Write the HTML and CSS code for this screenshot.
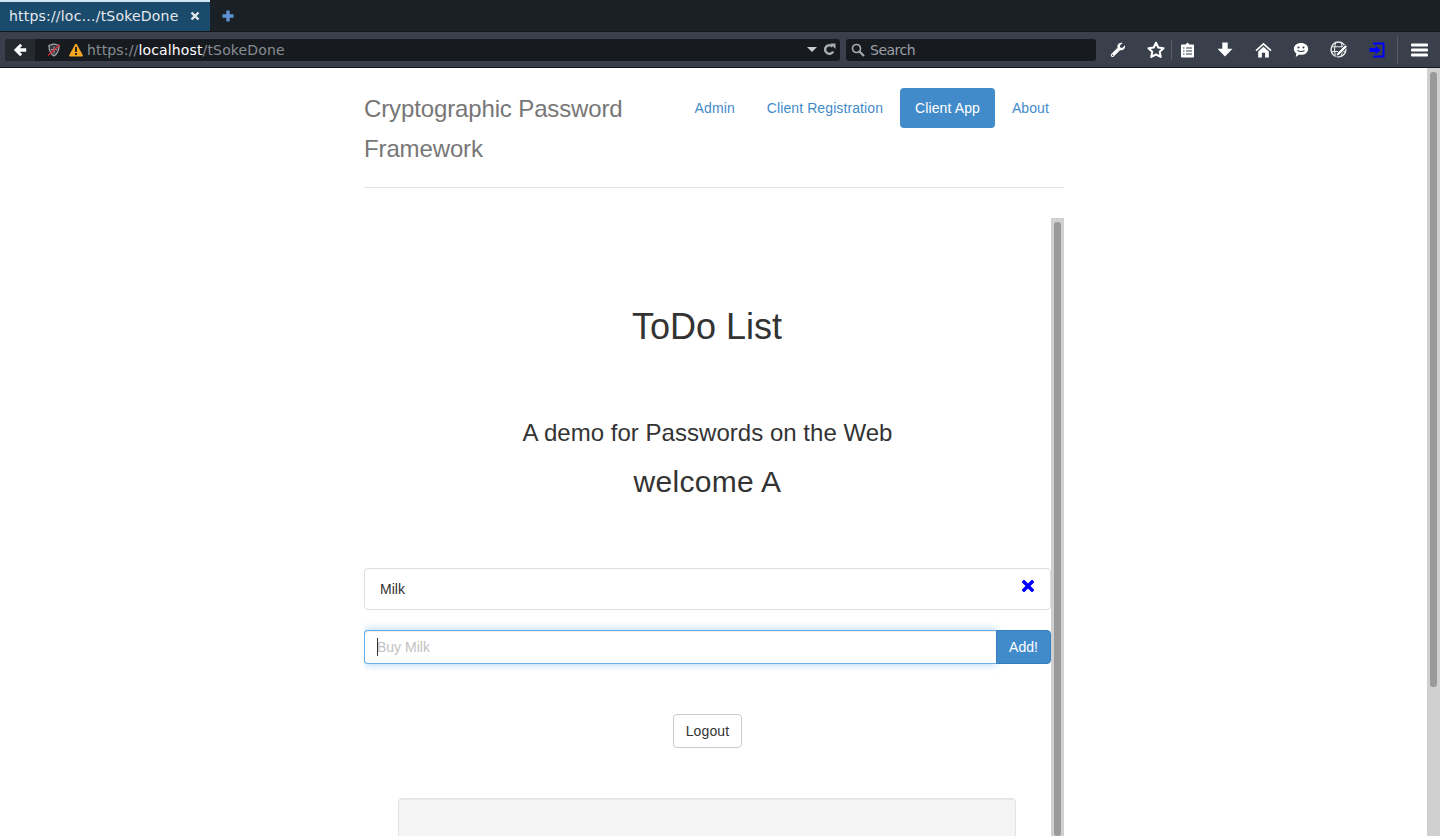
FILE: index.html
```html
<!DOCTYPE html>
<html lang="en">
<head>
  <meta charset="UTF-8" />
  <title>Cryptographic Password Framework</title>
  <link rel="stylesheet" href="styles.css">
</head>
<body>
  <div class="tabbar">
    <div class="tab">
      <span class="tab-title">https://loc…/tSokeDone</span>
      <svg class="tab-close" width="10" height="10" viewBox="0 0 10 10"><path d="M1.5 1.5l7 7M8.5 1.5l-7 7" stroke="#e6e9ec" stroke-width="2.4"/></svg>
    </div>
    <svg class="tab-new" width="12" height="12" viewBox="0 0 12 12"><path d="M6 .5v11M.5 6h11" stroke="#5f93d3" stroke-width="3.4"/></svg>
  </div>

  <div class="toolbar">
    <div class="urlbar">
      <div class="back">
        <svg width="14" height="14" viewBox="0 0 14 14"><path d="M7.200.8L.8 7l6.400 6.200 2-2-2.500-2.400h6.500V5.200H6.700l2.500-2.400z" fill="#fff"/></svg>
      </div>
      <svg class="shield" width="14" height="14" viewBox="0 0 14 14"><path d="M7 1l5 1.500c0 4.600-1 8.200-5 10.300C3 10.700 2 7.100 2 2.500z" fill="#33373d" stroke="#a3a6aa" stroke-width="1.300"/><path d="M7 3.500v7M4.200 6.500h5.600" stroke="#a3a6aa" stroke-width="1"/><path d="M1 12.500L12.500 1.800" stroke="#e0222e" stroke-width="1.300"/></svg>
      <svg class="warn" width="14" height="14" viewBox="0 0 14 14"><path d="M7 .8c.5 0 .8.3 1 .7l5.700 10.600c.4.700 0 1.400-.8 1.400H1.100c-.8 0-1.200-.7-.8-1.400L6 1.500c.2-.4.5-.7 1-.7z" fill="#f5a623"/><path d="M6 4h2v5H6zM6 10h2v2H6z" fill="#2b2415"/></svg>
      <span class="url"><span class="url-dim">https://</span>localhost<span class="url-dim">/tSokeDone</span></span>
      <svg class="url-drop" width="10" height="5" viewBox="0 0 10 5"><path d="M0 0h10L5 5z" fill="#c9ccd0"/></svg>
      <svg class="url-reload" width="13" height="13" viewBox="0 0 13 13"><path d="M10.200 8.500A4.300 4.300 0 1 1 9.500 3.500" fill="none" stroke="#a5abb2" stroke-width="2.600"/><path d="M7 .5h5.500V6z" fill="#a5abb2"/></svg>
    </div>
    <div class="searchbar">
      <svg width="14" height="14" viewBox="0 0 14 14"><circle cx="5.500" cy="5.500" r="4" fill="none" stroke="#a5abb2" stroke-width="1.700"/><path d="M8.500 8.500l4.500 4.500" stroke="#a5abb2" stroke-width="2.200"/></svg>
      <span>Search</span>
    </div>

    <div class="tool">
      <svg width="16" height="16" viewBox="0 0 16 16"><path d="M15 3.200l-2.800 2.700-2-.3-.4-2L12.600 1C10.500.2 8 1.400 7.500 3.600c-.2.800-.1 1.500.1 2.200L1.300 12c-.7.700-.7 1.700 0 2.400s1.700.7 2.400 0l6.300-6.200c2.700.7 5.700-1.700 5-5z" fill="#fff"/><circle cx="2.600" cy="13.200" r=".8" fill="#39404b"/></svg>
    </div>
    <div class="tool tool-star">
      <svg width="18" height="18" viewBox="0 0 16 16"><path d="M8 1.500l2 4.300 4.700.6-3.400 3.200.9 4.600L8 12l-4.200 2.200.9-4.600-3.400-3.200 4.700-.6z" fill="none" stroke="#fff" stroke-width="1.800" stroke-linejoin="round"/></svg>
    </div>
    <span class="tool-sep tool-sep-star"></span>
    <div class="tool tool-clip">
      <svg width="15" height="16" viewBox="0 0 15 16"><path d="M2 2.500h3.500L7.500.5l2 2H13c.6 0 1 .4 1 1v11c0 .6-.4 1-1 1H2c-.6 0-1-.4-1-1v-11c0-.6.4-1 1-1z" fill="#fff"/><path d="M3 6h1.500M6 6h6M3 9h1.500M6 9h6M3 12h1.500M6 12h6" stroke="#39404b" stroke-width="1.100"/></svg>
    </div>
    <div class="tool">
      <svg width="16" height="15" viewBox="0 0 16 15"><path d="M5.300.5h5.400v6.300h4.800L8 14.500.5 6.800h4.800z" fill="#fff"/></svg>
    </div>
    <div class="tool">
      <svg width="17" height="16" viewBox="0 0 16 15"><path d="M8 .6L.4 7.500l1.100 1.200L8 2.800l6.500 5.900 1.100-1.200z" fill="#fff"/><path d="M3 9l5-4.500L13 9v5.500H9.500V10h-3v4.500H3z" fill="#fff"/></svg>
    </div>
    <div class="tool">
      <svg width="16" height="16" viewBox="0 0 15 15"><path d="M7.500 1C3.600 1 .8 3.400.8 6.500c0 1.700.9 3.200 2.300 4.200L2.600 14l3.300-2.200c.5.100 1 .2 1.600.2 3.900 0 6.700-2.400 6.700-5.500S11.400 1 7.500 1z" fill="#fff"/><circle cx="5.200" cy="5.200" r="1" fill="#39404b"/><circle cx="9.800" cy="5.200" r="1" fill="#39404b"/><path d="M4.200 7.800c1.600 1.500 5 1.500 6.600 0" fill="none" stroke="#39404b" stroke-width="1.100"/></svg>
    </div>
    <div class="tool">
      <svg width="18" height="18" viewBox="0 0 17 17"><circle cx="8" cy="8" r="7" fill="none" stroke="#e4e6e8" stroke-width="1.400"/><path d="M1.500 5.500h13M1.500 10h13M5.500 1.500c-1.500 4-1.500 9 0 13M10.500 1.500c1.500 4 1.500 9 0 13" fill="none" stroke="#e4e6e8" stroke-width="1"/><path d="M14.500 3.500l2 2-8 8-3 1 1-3z" fill="#fff" stroke="#39404b" stroke-width=".9"/></svg>
    </div>
    <div class="tool">
      <svg width="16" height="16" viewBox="0 0 16 16"><path d="M4 .5h11.500v15H4v-2h9.500v-11H4z" fill="#0000ff"/><path d="M6.500 3.500L11.500 8l-5 4.500V10H.5V6h6z" fill="#0000ff"/></svg>
    </div>
    <span class="tool-sep tool-sep-menu"></span>
    <div class="tool">
      <svg width="17" height="14" viewBox="0 0 17 14"><rect y="0.500" width="17" height="3" rx="1" fill="#fff"/><rect y="5.500" width="17" height="3" rx="1" fill="#fff"/><rect y="10.500" width="17" height="3" rx="1" fill="#fff"/></svg>
    </div>
  </div>

  <div class="viewport">
    <div class="page">
      <div class="container">
        <div class="header">
          <div class="brand">Cryptographic Password Framework</div>
          <ul class="nav">
            <li><a>Admin</a></li>
            <li><a>Client Registration</a></li>
            <li class="active"><a>Client App</a></li>
            <li><a>About</a></li>
          </ul>
        </div>

        <div class="panel">
          <div class="panel-body">
            <h1>ToDo List</h1>
            <h3>A demo for Passwords on the Web</h3>
            <h2>welcome A</h2>

            <div class="todo-item">
              <span>Milk</span>
              <svg class="todo-remove" width="12" height="12" viewBox="0 0 12 12"><path d="M2 2l8 8M10 2l-8 8" stroke="#0000ff" stroke-width="3.600" stroke-linecap="square"/></svg>
            </div>

            <div class="input-group">
              <input class="todo-input" type="text" placeholder="Buy Milk">
              <span class="caret"></span>
              <button class="btn-add">Add!</button>
            </div>

            <div class="logout-row"><button class="btn-default">Logout</button></div>

            <div class="well"></div>
          </div>
          <div class="scrollbar panel-scrollbar"><div class="thumb"></div></div>
        </div>
      </div>
    </div>
    <div class="scrollbar page-scrollbar"><div class="thumb"></div></div>
  </div>
</body>
</html>
```

FILE: styles.css
```css
html, body { margin: 0; height: 100%; overflow: hidden; }
body { display: flex; flex-direction: column; height: 836px; font-family: "Liberation Sans", Arial, sans-serif; font-size: 14px; color: #333; background: #fff; }

.tabbar { display: flex; align-items: center; height: 31px; background: #1b2026; flex: none; }
.tab { display: flex; align-items: center; justify-content: space-between; box-sizing: border-box; width: 210px; height: 31px; padding: 0 10px 2px 9px; background: #1a4a6c; border-top: 2px solid #cfe6f5; font-family: "DejaVu Sans", sans-serif; font-size: 14px; letter-spacing: .2px; color: #e6e9ec; }
.tab-new { margin-left: 12px; }

.toolbar { display: flex; align-items: center; height: 37px; padding-left: 5px; background: #39404b; border-top: 1px solid #14171b; border-bottom: 1px solid #14171b; box-sizing: border-box; flex: none; font-family: "DejaVu Sans", sans-serif; }
.urlbar { display: flex; align-items: center; width: 835px; height: 22px; background: #171b1f; border-radius: 3px; overflow: hidden; }
.back { display: flex; align-items: center; justify-content: center; width: 30px; height: 100%; background: #252a31; }
.shield { margin-left: 12px; }
.warn { margin-left: 8px; }
.url { margin-left: 4px; color: #fff; font-size: 14px; letter-spacing: .15px; }
.url-dim { color: #878c93; }
.url-drop { margin-left: auto; }
.url-reload { margin: 0 4px 0 6px; }

.searchbar { display: flex; align-items: center; gap: 5px; box-sizing: border-box; width: 250px; height: 22px; margin-left: 6px; padding-left: 5px; background: #171b1f; border-radius: 3px; color: #9a9fa6; font-size: 14px; letter-spacing: -.5px; }

.tool { display: flex; align-items: center; justify-content: center; width: 38px; height: 100%; flex: none; }
.searchbar + .tool { margin-left: 3px; }
.tool-clip { width: 30px; margin-right: 4px; }
.tool-sep { width: 1px; height: 20px; background: #565d68; flex: none; }
.tool-sep-star { margin-left: -4px; }
.tool-sep-menu { height: 28px; margin: 0 2px 0 1px; }

.viewport { display: flex; flex: 1; min-height: 0; }
.page { flex: 1; min-width: 0; padding-left: 1px; overflow: hidden; }
.container { display: flex; flex-direction: column; box-sizing: border-box; width: 700px; height: 100%; margin: 0 auto; }

.scrollbar { box-sizing: border-box; flex: none; width: 13px; height: 100%; padding: 4px 3px 0; background: #d0d0d0; }
.thumb { width: 7px; background: #9a9a9a; border-radius: 3px; }
.page-scrollbar .thumb { height: 615px; }
.panel-scrollbar .thumb { height: 100%; }

.header { display: flex; justify-content: space-between; align-items: flex-start; padding: 20px 0 18px; border-bottom: 1px solid #e5e5e5; flex: none; }
.brand { width: 300px; margin-top: 1px; font-size: 24px; line-height: 40px; letter-spacing: -.13px; color: #777; }
.nav { display: flex; gap: 2px; margin: 0; padding: 0; list-style: none; }
.nav a { display: block; padding: 10px 15px; line-height: 20px; letter-spacing: .1px; color: #428bca; border-radius: 4px; }
.nav .active a { color: #fff; background: #428bca; }

.panel { display: flex; flex: 1; min-height: 0; margin-top: 30px; overflow: hidden; }
.panel-body { flex: 1; min-width: 0; padding-top: 89px; }
h1, h2, h3 { margin: 0; font-weight: 500; text-align: center; line-height: 1.1; }
h1 { padding-right: 1px; font-size: 36px; }
h3 { margin-top: 73px; font-size: 24px; letter-spacing: .03px; }
h2 { margin-top: 19px; font-size: 30px; letter-spacing: .3px; }

.todo-item { display: flex; justify-content: space-between; align-items: flex-start; margin-top: 70px; padding: 10px 15px; border: 1px solid #ddd; border-radius: 4px; line-height: 20px; }
.todo-remove { margin: 1px 1px 0 0; }

.input-group { display: flex; position: relative; margin-top: 20px; height: 34px; }
.todo-input { flex: 1; min-width: 0; box-sizing: border-box; padding: 6px 12px; border: 1px solid #66afe9; border-right: 0; border-radius: 4px 0 0 4px; outline: 0; font: inherit; box-shadow: inset 0 1px 1px rgba(0,0,0,.075), 0 0 8px rgba(102,175,233,.6); }
.todo-input::placeholder { color: #c2c2c2; opacity: 1; }
.caret { position: absolute; left: 13px; top: 8px; width: 1px; height: 18px; background: #333; }
.btn-add { box-sizing: border-box; width: 55px; padding: 0; border: 1px solid #357ebd; border-radius: 0 4px 4px 0; background: #428bca; color: #fff; font: inherit; }

.logout-row { display: flex; justify-content: center; margin-top: 50px; }
.btn-default { box-sizing: border-box; height: 34px; padding: 6px 12px; border: 1px solid #ccc; border-radius: 4px; background: #fff; color: #333; font: inherit; letter-spacing: .15px; }

.well { height: 200px; margin: 50px 35px 0 34px; background: #f5f5f5; border: 1px solid #e3e3e3; border-radius: 4px; box-shadow: inset 0 1px 1px rgba(0,0,0,.05); }
```
